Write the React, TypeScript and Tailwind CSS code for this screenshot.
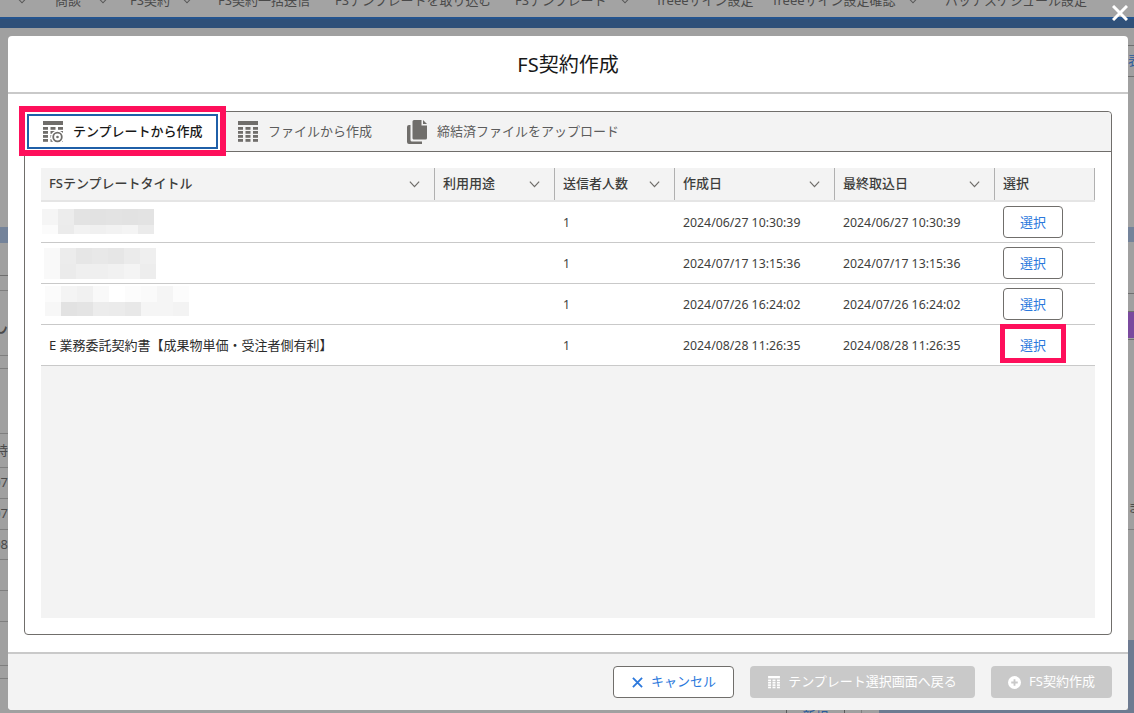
import { FC } from "react";

const FONT = "font-['Noto_Sans','Noto_Sans_CJK_JP',sans-serif]";

const navItems = [
    { label: "商談", w: "w-[75px] pr-[22px]", chevron: true },
    { label: "FS契約", w: "w-[88px] pr-[26px]", chevron: true },
    { label: "FS契約一括送信", w: "w-[117px]", chevron: false },
    { label: "FSテンプレートを取り込む", w: "w-[180px]", chevron: false },
    { label: "FSテンプレート", w: "w-[142px] pr-[27px]", chevron: true },
    { label: "freeeサイン設定", w: "w-[116px]", chevron: false },
    { label: "freeeサイン設定確認", w: "w-[172px] pr-[27px]", chevron: true },
    { label: "バッチスケジュール設定", w: "w-[170px]", chevron: false },
];

const leftStrip = [
    { h: "h-[199px]", cls: "" },
    { h: "h-[16px]", cls: "bg-[#74839a]" },
    { h: "h-[33px]", cls: "border-b border-[#6f6f6f]" },
    { h: "h-[15px]", cls: "border-b border-[#7f7f7f]" },
    { h: "h-[65px]", cls: "border-b border-[#7f7f7f]", text: "ん", big: true },
    { h: "h-[13px]", cls: "border-b border-[#7f7f7f]" },
    { h: "h-[65px]", cls: "border-b border-[#7f7f7f]" },
    { h: "h-[34px]", cls: "border-b border-[#7f7f7f]", text: "時" },
    { h: "h-[31px]", cls: "border-b border-[#7f7f7f]", text: "07" },
    { h: "h-[31px]", cls: "border-b border-[#7f7f7f]", text: "07" },
    { h: "h-[30px]", cls: "border-b border-[#7f7f7f]", text: "08" },
    { h: "h-[31px]", cls: "border-b border-[#7f7f7f]" },
    { h: "h-[31px]", cls: "border-b border-[#7f7f7f]" },
    { h: "h-[44px]", cls: "border-b border-[#7f7f7f]" },
    { h: "h-[13px]", cls: "border-b border-[#7f7f7f]" },
    { h: "h-[34px]", cls: "" },
];

const rightStrip = [
    { h: "h-[18px]", cls: "border-b border-[#6f6f6f]" },
    { h: "h-[31px]", cls: "border-b border-[#6f6f6f] text-[#2a5a9c]", text: "表" },
    { h: "h-[150px]", cls: "" },
    { h: "h-[15px]", cls: "bg-[#74839a]" },
    { h: "h-[52px]", cls: "border-b border-[#6f6f6f]" },
    { h: "h-[18px]", cls: "border-b border-[#6f6f6f]" },
    { h: "h-[26px]", cls: "bg-[#7a4a9e]" },
    { h: "h-[2px]", cls: "border-b border-[#6f6f6f]" },
    { h: "h-[147px]", cls: "" },
    { h: "h-[43px]", cls: "border-b border-[#7f7f7f]", text: "ま" },
    { h: "h-[110px]", cls: "" },
    { h: "h-[73px]", cls: "bg-[#6d7b91]" },
];

const columns = [
    { label: "FSテンプレートタイトル", w: "w-[394px]", sort: true },
    { label: "利用用途", w: "w-[120px]", sort: true },
    { label: "送信者人数", w: "w-[120px]", sort: true },
    { label: "作成日", w: "w-[160px]", sort: true },
    { label: "最終取込日", w: "w-[160px]", sort: true },
    { label: "選択", w: "w-[100px]", sort: false },
];

const rows = [
    {
        date: "2024/06/27 10:30:39",
        blur: {
            pad: "pl-px mb-px",
            top: "h-[16px]",
            bottom: "h-[9px]",
            colsTop: ["bg-[#f5f5f5]", "bg-[#ececec]", "bg-[#e3e3e3]", "bg-[#e2e2e2]", "bg-[#e3e3e3]", "bg-[#e2e2e2]", "bg-[#e3e3e3]"],
            colsBottom: ["bg-[#fbfbfb]", "bg-[#ebebeb]", "bg-[#f2f2f2]", "bg-[#f0f0f0]", "bg-[#f2f2f2]", "bg-[#f4f4f4]", "bg-[#ebebeb]"],
        },
    },
    {
        date: "2024/07/17 13:15:36",
        blur: {
            pad: "pl-[3px]",
            top: "h-[16px]",
            bottom: "h-[15px]",
            colsTop: ["bg-[#f9f9f9]", "bg-[#ececec]", "bg-[#e6e6e6]", "bg-[#e8e8e8]", "bg-[#e6e6e6]", "bg-[#ebebeb]", "bg-[#efefef]"],
            colsBottom: ["bg-[#f9f9f9]", "bg-[#ebebeb]", "bg-[#efefef]", "bg-[#efefef]", "bg-[#f1f1f1]", "bg-[#f4f4f4]", "bg-[#ededed]"],
        },
    },
    {
        date: "2024/07/26 16:24:02",
        blur: {
            pad: "pl-[4px] mb-[6px]",
            top: "h-[16px]",
            bottom: "h-[14px]",
            colsTop: ["bg-[#fbfbfb]", "bg-[#f4f4f4]", "bg-[#f1f1f1]", "bg-[#f9f9f9]", "bg-[#ffffff]", "bg-[#fcfcfc]", "bg-[#fafafa]", "bg-[#f5f5f5]", "bg-[#fcfcfc]"],
            colsBottom: ["bg-[#f7f7f7]", "bg-[#e2e2e2]", "bg-[#e4e4e4]", "bg-[#ececec]", "bg-[#ebebeb]", "bg-[#e8e8e8]", "bg-[#f5f5f5]", "bg-[#f5f5f5]", "bg-[#f3f3f3]"],
        },
    },
    {
        date: "2024/08/28 11:26:35",
        title: "E 業務委託契約書【成果物単価・受注者側有利】",
        marked: true,
    },
];

const GridIcon: FC<{ className?: string; withGear?: boolean }> = ({ className, withGear }) => (
    <svg viewBox="0 0 20 22" className={className} fill="currentColor">
        <rect x="0" y="0" width="20" height="4" />
        {[6, 10, 14, 18].map((y) =>
            [0, 7.5, 15].map((x) => <rect key={`${x}-${y}`} x={x} y={y} width="5" height="2.8" />),
        )}
        {withGear && (
            <g>
                <circle cx="14.5" cy="16" r="6.6" fill="#ffffff" />
                <circle cx="14.5" cy="16" r="4.3" fill="none" stroke="currentColor" strokeWidth="1.8" />
                <circle cx="14.5" cy="16" r="1.3" />
            </g>
        )}
    </svg>
);

const CopyIcon: FC = () => (
    <svg viewBox="0 0 20 24" className="h-[24px] w-[20px] text-[#706e6b]" fill="currentColor">
        <path d="M7 0h7.5v5.5H20V18a1.5 1.5 0 0 1-1.5 1.5h-11A1.5 1.5 0 0 1 5.500 18V1.500A1.500 1.500 0 0 1 7 0z" />
        <path d="M16 0l4 4h-4z" />
        <path d="M3.500 5v15a1.500 1.500 0 0 0 1.500 1.500h10V24H2a2 2 0 0 1-2-2V7a2 2 0 0 1 2-2z" />
    </svg>
);

const Chevron: FC<{ className?: string }> = ({ className = "h-[7px] w-[13px] text-[#706e6b]" }) => (
    <svg viewBox="0 0 12 8" className={className} fill="none" stroke="currentColor" strokeWidth="1.4">
        <path d="M0.700 0.800 6 6.400 11.300 0.800" />
    </svg>
);

const Strip: FC<{ items: { h: string; cls: string; text?: string; big?: boolean }[]; align: string }> = ({ items, align }) => (
    <div className="flex w-[6px] shrink-0 grow flex-col overflow-hidden bg-[#a0a0a0] text-[#4a4a4a]">
        {items.map((s, i) => (
            <div
                key={i}
                className={`flex shrink-0 items-center overflow-hidden whitespace-nowrap ${align} ${s.big ? "text-[22px]" : "text-[13px]"} ${s.h} ${s.cls}`}
            >
                {s.text}
            </div>
        ))}
    </div>
);

const BlurBlock: FC<{ blur: NonNullable<(typeof rows)[number]["blur"]> }> = ({ blur }) => (
    <div className={`flex flex-col ${blur.pad}`}>
        <div className="flex">
            {blur.colsTop.map((c, i) => (
                <div key={i} className={`w-[16px] ${blur.top} ${c}`} />
            ))}
        </div>
        <div className="flex">
            {blur.colsBottom.map((c, i) => (
                <div key={i} className={`w-[16px] ${blur.bottom} ${c}`} />
            ))}
        </div>
    </div>
);

export default function App() {
    return (
        <div className={`relative flex h-[713px] w-[1134px] flex-col overflow-hidden bg-[#a0a0a0] text-[#3e3e3c] ${FONT}`}>
            {/* page behind the dialog */}
            <div className="flex h-[17px] shrink-0 items-center overflow-hidden bg-[#a3a3a3] pb-[15px] pl-[17px] text-[13px] whitespace-nowrap text-[#4a4a4a]">
                <div className="flex w-[38px] shrink-0">
                    <Chevron className="h-[6px] w-[10px] text-[#5a5a5a]" />
                </div>
                {navItems.map((n) => (
                    <div key={n.label} className={`flex shrink-0 items-center justify-between ${n.w}`}>
                        {n.label}
                        {n.chevron && <Chevron className="h-[6px] w-[10px] shrink-0 text-[#5a5a5a]" />}
                    </div>
                ))}
            </div>
            <div className="h-[11px] shrink-0 border-t-2 border-[#24548f] bg-[#2f5079]" />

            <div className="flex h-[685px] shrink-0">
                <div className="flex w-[8px] shrink-0 overflow-hidden">
                    <Strip items={leftStrip} align="justify-end" />
                </div>

                <div className="flex w-[1120px] shrink-0 flex-col pt-[8px]">
                    <div className="flex h-[674px] shrink-0 flex-col overflow-hidden rounded-[4px] bg-white">
                        <div className="flex h-[58px] shrink-0 items-center justify-center border-b-2 border-[#c9c9c9] pt-[2px] text-[20px] text-[#181818]">
                            FS契約作成
                        </div>

                        <div className="flex flex-1 flex-col px-[16px] py-[17px]">
                            <div className="flex h-[524px] flex-col rounded-[4px] border border-[#706e6b]">
                                <div className="flex h-[40px] shrink-0 rounded-t-[4px] border-b border-[#706e6b] bg-[#f3f3f3] text-[13px] text-[#5c5c5c]">
                                    <div className="relative flex h-[39px] w-[195px] shrink-0 bg-white p-[2px]">
                                        <div className="flex flex-1 items-center border-2 border-[#1f5fa8] pl-[14px] font-medium text-[#181818]">
                                            <GridIcon withGear className="h-[22px] w-[20px] text-[#706e6b]" />
                                            <span className="ml-[10px] pt-px">テンプレートから作成</span>
                                        </div>
                                        <div className="absolute top-[-6px] left-[-6px] h-[50px] w-[207px] border-[6px] border-[#fe0f5b]" />
                                    </div>
                                    <div className="ml-[18px] flex items-center">
                                        <GridIcon className="h-[22px] w-[20px] text-[#706e6b]" />
                                        <span className="ml-[10px] pt-px">ファイルから作成</span>
                                    </div>
                                    <div className="ml-[35px] flex items-center">
                                        <CopyIcon />
                                        <span className="ml-[10px] pt-px">締結済ファイルをアップロード</span>
                                    </div>
                                </div>

                                <div className="flex flex-1 px-[16px] pt-[16px] pb-[16px]">
                                    <div className="flex w-[1054px] flex-col bg-[#f3f3f3]">
                                        <div className="flex h-[34px] shrink-0 border-b-2 border-[#e5e5e5] text-[13px] font-medium">
                                            {columns.map((c) => (
                                                <div
                                                    key={c.label}
                                                    className={`flex h-[32px] shrink-0 items-center justify-between border-r border-[#b0b0b0] pr-[13px] pl-[8px] ${c.w}`}
                                                >
                                                    <span>{c.label}</span>
                                                    {c.sort && <Chevron />}
                                                </div>
                                            ))}
                                        </div>

                                        {rows.map((r) => (
                                            <div key={r.date} className="flex h-[41px] shrink-0 items-center border-b border-[#c9c9c9] bg-white text-[12.3px]">
                                                <div className="w-[394px] shrink-0 pl-[8px] text-[13px] text-[#2b2b2b]">
                                                    {r.blur ? (
                                                        <div className="-ml-[8px]">
                                                            <BlurBlock blur={r.blur} />
                                                        </div>
                                                    ) : (
                                                        <div className="pt-px">{r.title}</div>
                                                    )}
                                                </div>
                                                <div className="w-[120px] shrink-0" />
                                                <div className="w-[120px] shrink-0 pt-[2px] pl-[8px]">1</div>
                                                <div className="w-[160px] shrink-0 pt-[2px] pl-[8px]">{r.date}</div>
                                                <div className="w-[160px] shrink-0 pt-[2px] pl-[8px]">{r.date}</div>
                                                <div className="w-[100px] shrink-0 pl-[8px]">
                                                    <div
                                                        className={`relative flex h-[32px] w-[60px] items-center justify-center rounded-[4px] pt-px text-[13px] text-[#2b78dc] ${r.marked ? "" : "border border-[#706e6b]"}`}
                                                    >
                                                        選択
                                                        {r.marked && (
                                                            <div className="absolute top-[-5px] left-[-3px] h-[39px] w-[66px] border-[5px] border-[#fe0f5b]" />
                                                        )}
                                                    </div>
                                                </div>
                                            </div>
                                        ))}
                                    </div>
                                </div>
                            </div>
                        </div>

                        <div className="flex h-[58px] shrink-0 items-center justify-end gap-[16px] border-t-2 border-[#c9c9c9] bg-[#f3f3f3] pr-[16px] text-[13px]">
                            <div className="flex h-[32px] w-[121px] items-center justify-center gap-[8px] rounded-[4px] border border-[#706e6b] bg-white pl-[1px] text-[#2b78dc]">
                                <svg viewBox="0 0 12 12" className="h-[11px] w-[11px]" fill="none" stroke="currentColor" strokeWidth="2">
                                    <path d="M1 1 11 11M11 1 1 11" />
                                </svg>
                                キャンセル
                            </div>
                            <div className="flex h-[32px] w-[225px] items-center justify-center gap-[8px] rounded-[4px] bg-[#c9c9c9] text-white">
                                <GridIcon className="h-[13px] w-[12px] text-white" />
                                テンプレート選択画面へ戻る
                            </div>
                            <div className="flex h-[32px] w-[121px] items-center justify-center gap-[8px] rounded-[4px] bg-[#c9c9c9] text-white">
                                <svg viewBox="0 0 14 14" className="h-[13px] w-[13px]">
                                    <circle cx="7" cy="7" r="7" fill="#ffffff" />
                                    <path d="M7 3.500v7M3.500 7h7" stroke="#c9c9c9" strokeWidth="2" />
                                </svg>
                                FS契約作成
                            </div>
                        </div>
                    </div>

                    {/* sliver of the page below the dialog */}
                    <div className="flex h-[3px] shrink-0 overflow-hidden">
                        <div className="w-[778px] shrink-0" />
                        <div className="flex w-[59px] shrink-0 justify-center border-x border-[#5a5a5a] text-[13px] leading-[13px] text-[#2a5a9c]">
                            新規
                        </div>
                        <div className="w-[17px] shrink-0 border-r border-[#7f7f7f]" />
                        <div className="w-[17px] shrink-0" />
                        <div className="flex-1 bg-[#6d7b91]" />
                    </div>
                </div>

                <div className="flex w-[6px] shrink-0 overflow-hidden">
                    <Strip items={rightStrip} align="justify-start" />
                </div>
            </div>

            {/* close button of the dialog */}
            <svg viewBox="0 0 16 16" className="absolute top-[5px] right-[6px] h-[16px] w-[16px] text-white" fill="none" stroke="currentColor" strokeWidth="3">
                <path d="M1 1 15 15M15 1 1 15" />
            </svg>
        </div>
    );
}
